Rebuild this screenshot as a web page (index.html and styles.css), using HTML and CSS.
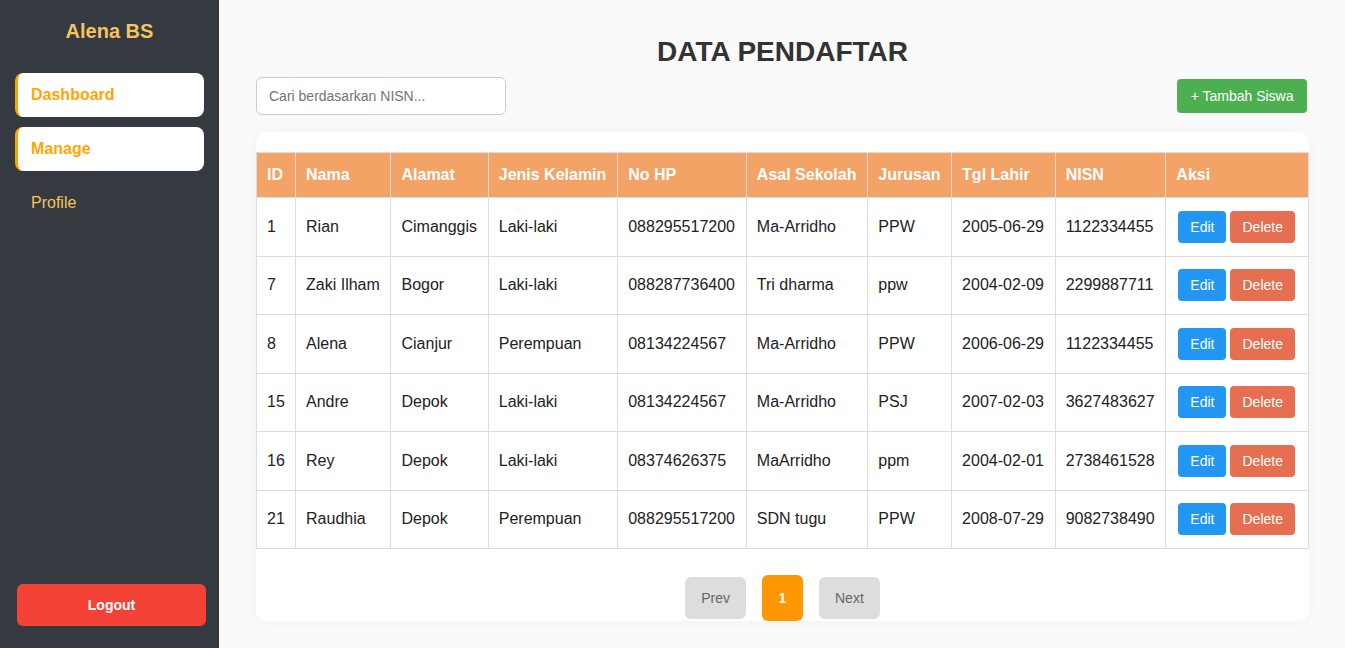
FILE: index.html
```html
<!DOCTYPE html>
<html lang="en">
  <head>
    <meta charset="utf-8">
    <title>Data Pendaftar</title>
    <link rel="stylesheet" href="styles.css">
  </head>

  <body>
    <aside class="sidebar">
      <h2 class="brand">Alena BS</h2>
      <nav class="nav">
        <a class="nav-item active" href="#">Dashboard</a>
        <a class="nav-item active" href="#">Manage</a>
        <a class="nav-item" href="#">Profile</a>
      </nav>
      <button class="btn-logout">Logout</button>
    </aside>

    <main class="main">
      <h1 class="title">DATA PENDAFTAR</h1>

      <div class="toolbar">
        <input class="search" type="text" placeholder="Cari berdasarkan NISN...">
        <button class="btn-add">+ Tambah Siswa</button>
      </div>

      <div class="card">
        <table class="data">
          <thead>
            <tr>
              <th>ID</th>
              <th>Nama</th>
              <th>Alamat</th>
              <th>Jenis Kelamin</th>
              <th>No HP</th>
              <th>Asal Sekolah</th>
              <th>Jurusan</th>
              <th>Tgl Lahir</th>
              <th>NISN</th>
              <th>Aksi</th>
            </tr>
          </thead>
          <tbody>
            <tr>
              <td>1</td><td>Rian</td><td>Cimanggis</td><td>Laki-laki</td><td>088295517200</td>
              <td>Ma-Arridho</td><td>PPW</td><td>2005-06-29</td><td>1122334455</td>
              <td><button class="btn-edit">Edit</button><button class="btn-delete">Delete</button></td>
            </tr>
            <tr>
              <td>7</td><td>Zaki Ilham</td><td>Bogor</td><td>Laki-laki</td><td>088287736400</td>
              <td>Tri dharma</td><td>ppw</td><td>2004-02-09</td><td>2299887711</td>
              <td><button class="btn-edit">Edit</button><button class="btn-delete">Delete</button></td>
            </tr>
            <tr>
              <td>8</td><td>Alena</td><td>Cianjur</td><td>Perempuan</td><td>08134224567</td>
              <td>Ma-Arridho</td><td>PPW</td><td>2006-06-29</td><td>1122334455</td>
              <td><button class="btn-edit">Edit</button><button class="btn-delete">Delete</button></td>
            </tr>
            <tr>
              <td>15</td><td>Andre</td><td>Depok</td><td>Laki-laki</td><td>08134224567</td>
              <td>Ma-Arridho</td><td>PSJ</td><td>2007-02-03</td><td>3627483627</td>
              <td><button class="btn-edit">Edit</button><button class="btn-delete">Delete</button></td>
            </tr>
            <tr>
              <td>16</td><td>Rey</td><td>Depok</td><td>Laki-laki</td><td>08374626375</td>
              <td>MaArridho</td><td>ppm</td><td>2004-02-01</td><td>2738461528</td>
              <td><button class="btn-edit">Edit</button><button class="btn-delete">Delete</button></td>
            </tr>
            <tr>
              <td>21</td><td>Raudhia</td><td>Depok</td><td>Perempuan</td><td>088295517200</td>
              <td>SDN tugu</td><td>PPW</td><td>2008-07-29</td><td>9082738490</td>
              <td><button class="btn-edit">Edit</button><button class="btn-delete">Delete</button></td>
            </tr>
          </tbody>
        </table>

        <div class="pagination">
          <button class="page-btn">Prev</button>
          <button class="page-btn current">1</button>
          <button class="page-btn">Next</button>
        </div>
      </div>
    </main>
  </body>
</html>
```

FILE: styles.css
```css
* {
  box-sizing: border-box;
}

body {
  margin: 0;
  height: 648px;
  display: flex;
  font-family: "Liberation Sans", Arial, sans-serif;
  color: #222;
  background: #fafafa;
  overflow: hidden;
}

button {
  font-family: inherit;
  border: none;
  cursor: pointer;
}

/* sidebar */

.sidebar {
  width: 219px;
  flex-shrink: 0;
  background: #343a40;
  padding: 0 15px 22px;
  display: flex;
  flex-direction: column;
}

.brand {
  margin: 20px 0 30px;
  text-align: center;
  font-size: 20px;
  color: #f6c35c;
}

.nav {
  flex: 1;
  display: flex;
  flex-direction: column;
  gap: 10px;
}

.nav-item {
  display: block;
  padding: 13px 13px;
  border-left: 3px solid transparent;
  border-radius: 8px;
  color: #f6c35c;
  font-size: 16px;
  text-decoration: none;
}

.nav-item.active {
  background: #fff;
  border-left-color: #ffa500;
  color: #ffa500;
  font-weight: bold;
}

.btn-logout {
  margin-left: 2px;
  margin-right: -2px;
  height: 42px;
  border-radius: 6px;
  background: #f44336;
  color: #fff;
  font-size: 14px;
  font-weight: bold;
}

/* main area */

.main {
  flex: 1;
  padding: 36px 36px 0 37px;
}

.title {
  margin: 0 0 9px;
  text-align: center;
  font-size: 28px;
  line-height: 32px;
  color: #333;
}

.toolbar {
  display: flex;
  justify-content: space-between;
  align-items: center;
  margin-bottom: 17px;
}

.search {
  width: 250px;
  height: 38px;
  padding: 0 12px;
  border: 1px solid #ccc;
  border-radius: 6px;
  font-family: inherit;
  font-size: 14px;
}

.search::placeholder {
  color: #757575;
}

.btn-add {
  margin-right: 2px;
  height: 34px;
  padding: 0 13.5px;
  border-radius: 4px;
  background: #4caf50;
  color: #fff;
  font-size: 14px;
}

.card {
  background: #fff;
  border-radius: 10px;
  padding-top: 20px;
  box-shadow: 0 0 14px rgba(0, 0, 0, 0.04);
}

/* table */

.data {
  width: 100%;
  border-collapse: collapse;
  font-size: 16px;
}

.data th,
.data td {
  border: 1px solid #ddd;
  padding: 12px 10px;
  text-align: left;
  white-space: nowrap;
}

.data th {
  background: #f2a365;
  color: #fff;
  font-weight: bold;
  padding: 13px 10px;
}

.data td {
  height: 58.5px;
}

.btn-edit,
.btn-delete {
  margin: 0 2px;
  padding: 8px 12px;
  border-radius: 4px;
  color: #fff;
  font-size: 14px;
}

.btn-edit {
  background: #2196f3;
}

.btn-delete {
  background: #e76f51;
}

/* pagination */

.pagination {
  display: flex;
  justify-content: center;
  align-items: center;
  gap: 16px;
  margin-top: 26px;
}

.page-btn {
  height: 42px;
  padding: 0 16px;
  border-radius: 6px;
  background: #ddd;
  color: #666;
  font-size: 14px;
}

.page-btn.current {
  height: 46px;
  width: 41px;
  padding: 0;
  background: #ff9800;
  color: #fff;
  font-weight: bold;
}
```
